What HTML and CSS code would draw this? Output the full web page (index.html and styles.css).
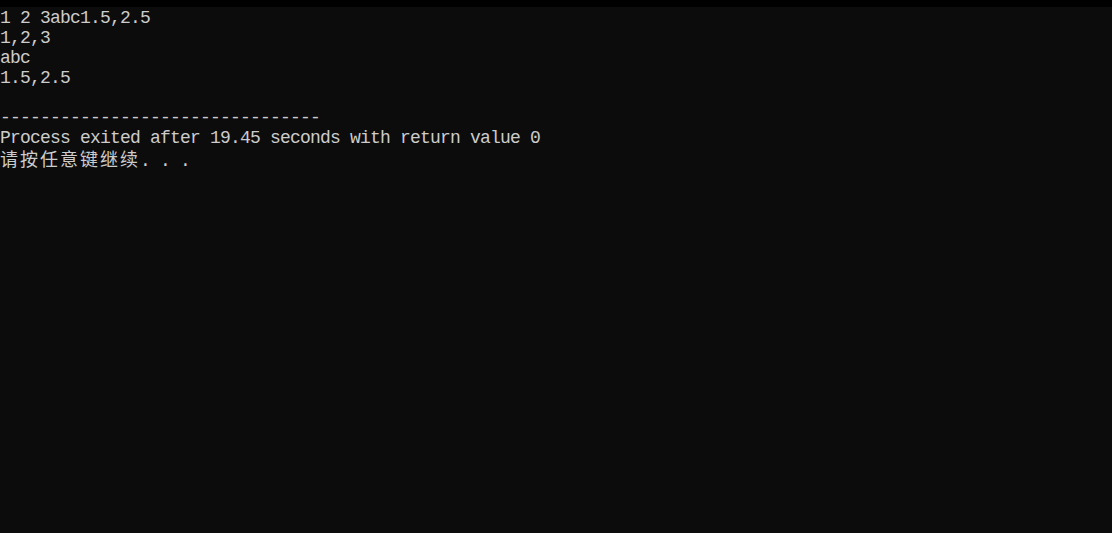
FILE: index.html
```html
<!DOCTYPE html>
<html lang="zh-CN">
<head>
<meta charset="utf-8">
<title>Console</title>
<link rel="stylesheet" href="styles.css">
</head>
<body>
<div class="console">
  <div class="topbar"></div>
  <div class="output">
    <div class="line">1 2 3abc1.5,2.5</div>
    <div class="line">1,2,3</div>
    <div class="line">abc</div>
    <div class="line">1.5,2.5</div>
    <div class="line"></div>
    <div class="line">--------------------------------</div>
    <div class="line">Process exited after 19.45 seconds with return value 0</div>
    <div class="line"><span class="cjk">请按任意键继续</span>. . .</div>
  </div>
</div>
</body>
</html>
```
FILE: styles.css
```css
html, body {
  margin: 0;
  padding: 0;
  background: #0c0c0c;
  width: 1112px;
  height: 533px;
  overflow: hidden;
}
.console {
  display: flex;
  flex-direction: column;
  height: 533px;
  background: #0c0c0c;
}
.topbar {
  height: 7px;
  background: #000000;
  flex: none;
}
.output {
  display: flex;
  flex-direction: column;
  padding-top: 1px;
  font-family: "Liberation Mono", "Noto Sans CJK SC", monospace;
  font-size: 18px;
  letter-spacing: -0.8px;
  color: #cccccc;
}
.line {
  height: 20px;
  line-height: 20px;
  white-space: pre;
}
.cjk {
  font-family: "Noto Sans CJK SC", sans-serif;
  font-size: 18px;
  letter-spacing: 2px;
  line-height: 20px;
}
```
